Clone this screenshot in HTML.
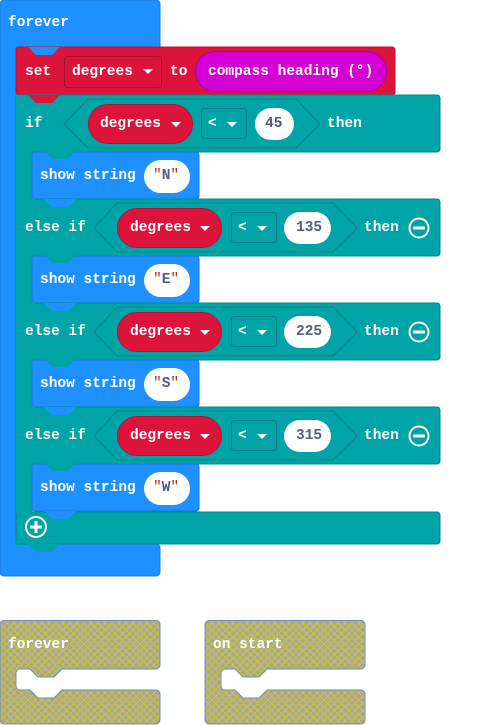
<!DOCTYPE html>
<html><head><meta charset="utf-8"><style>
html,body{margin:0;padding:0;background:#fff;width:492px;height:725px;overflow:hidden}
svg text{font-family:"Liberation Mono",monospace;font-weight:bold;font-size:14.5px;fill:#fff;dominant-baseline:central}
</style></head><body>
<svg width="492" height="725" viewBox="0 0 492 725" xmlns="http://www.w3.org/2000/svg">
<defs>
<pattern id="h" width="7" height="7" patternUnits="userSpaceOnUse">
<rect width="7" height="7" fill="#a6a6a0"/>
<path d="M0,0L7,7M7,0L0,7" stroke="#cfc52a" stroke-width="1.1"/>
</pattern>
</defs>
<!-- forever -->
<path d="M4,0H156a4,4 0 0 1 4,4V47H16V544H156a4,4 0 0 1 4,4V572a4,4 0 0 1-4,4H4a4,4 0 0 1-4-4V4a4,4 0 0 1 4-4Z" fill="#1e90ff" stroke="#1a7ad8" stroke-width="1"/>
<text x="8" y="23">forever</text>
<!-- set block -->
<rect x="16" y="47" width="379" height="48" rx="3" fill="#dc143c" stroke="#b8102f"/>
<polygon points="28,47 60,47 52,55 36,55" fill="#1e90ff"/>
<polygon points="28,95 60,95 52,103 36,103" fill="#dc143c"/>
<text x="25" y="72">set</text>
<rect x="64.5" y="56.5" width="97" height="31" rx="3" fill="#dc143c" stroke="#a80e2e"/>
<text x="72" y="72">degrees</text>
<path d="M143,69h10l-5,5z" fill="#fff"/>
<text x="170" y="72">to</text>
<rect x="195.5" y="51.5" width="191" height="40" rx="20" fill="#d400d4" stroke="#a800a8"/>
<text x="208" y="72">compass heading (°)</text>
<!-- if block -->
<path d="M19,95H437a3,3 0 0 1 3,3V149a3,3 0 0 1-3,3H32V544H19a3,3 0 0 1-3-3V98a3,3 0 0 1 3-3Z" fill="#00a4a6" stroke="#008b8d"/>
<rect x="16" y="95" width="16" height="450" fill="#00a4a6"/>
<polygon points="28,95 60,95 52,103 36,103" fill="#dc143c"/>
<!-- rows -->
<g id="rows"></g>
<!-- row helper rendered explicitly -->
<!-- IF row -->
<text x="25" y="124">if</text>
<polygon points="88,99 296,99 320,124 296,148 88,148 64,124" fill="#00a4a6" stroke="#008385"/>
<rect x="88.5" y="104.5" width="104" height="39" rx="19.5" fill="#dc143c" stroke="#b8102f"/>
<text x="100" y="124">degrees</text><path d="M171,122h10l-5,5z" fill="#fff"/>
<rect x="201.5" y="108.5" width="45" height="30" rx="3" fill="#00a4a6" stroke="#008385"/>
<text x="208" y="124">&lt;</text><path d="M227,122h10l-5,5z" fill="#fff"/>
<rect x="255" y="108" width="39" height="32" rx="16" fill="#fff"/>
<text x="265" y="124" style="fill:#575e75">45</text>
<text x="327" y="124">then</text>

<!-- show N -->
<rect x="32" y="152" width="167" height="47" rx="3" fill="#1e90ff" stroke="#1a7ad8"/>
<polygon points="44,151 76,151 68,159 52,159" fill="#00a4a6"/>
<polygon points="44,199 76,199 68,207 52,207" fill="#1e90ff"/>
<text x="40" y="176">show string</text>
<rect x="144" y="160" width="46" height="33" rx="16.5" fill="#fff"/>
<text x="153" y="176" style="fill:#575e75"><tspan style="fill:#b03030;font-weight:normal">"</tspan>N<tspan style="fill:#b03030;font-weight:normal">"</tspan></text>

<!-- else if rows -->
<g>
<rect x="32" y="199" width="408" height="57" rx="3" fill="#00a4a6" stroke="#008b8d"/>
<rect x="16" y="199" width="20" height="57" fill="#00a4a6"/>
<polygon points="44,199 76,199 68,207 52,207" fill="#1e90ff"/>
<text x="25" y="228">else if</text>
<polygon points="117,203 333,203 357,228 333,252 117,252 94,228" fill="#00a4a6" stroke="#008385"/>
<rect x="117.5" y="208.5" width="104" height="39" rx="19.5" fill="#dc143c" stroke="#b8102f"/>
<text x="130" y="228">degrees</text><path d="M200,226h10l-5,5z" fill="#fff"/>
<rect x="231.5" y="212.5" width="45" height="30" rx="3" fill="#00a4a6" stroke="#008385"/>
<text x="238" y="228">&lt;</text><path d="M257,226h10l-5,5z" fill="#fff"/>
<rect x="284" y="212" width="47" height="32" rx="16" fill="#fff"/>
<text x="296" y="228" style="fill:#575e75">135</text>
<text x="364" y="228">then</text>
<circle cx="419" cy="228" r="9.5" fill="none" stroke="#fff" stroke-width="2"/><rect x="413" y="226.5" width="12" height="3" fill="#fff"/>
<rect x="32" y="256" width="167" height="47" rx="3" fill="#1e90ff" stroke="#1a7ad8"/>
<polygon points="44,255 76,255 68,263 52,263" fill="#00a4a6"/>
<polygon points="44,303 76,303 68,311 52,311" fill="#1e90ff"/>
<text x="40" y="280">show string</text>
<rect x="144" y="264" width="46" height="33" rx="16.5" fill="#fff"/>
<text x="153" y="280" style="fill:#575e75"><tspan style="fill:#b03030;font-weight:normal">"</tspan>E<tspan style="fill:#b03030;font-weight:normal">"</tspan></text>
</g>
<g transform="translate(0,104)">
<rect x="32" y="199" width="408" height="57" rx="3" fill="#00a4a6" stroke="#008b8d"/>
<rect x="16" y="199" width="20" height="57" fill="#00a4a6"/>
<polygon points="44,199 76,199 68,207 52,207" fill="#1e90ff"/>
<text x="25" y="228">else if</text>
<polygon points="117,203 333,203 357,228 333,252 117,252 94,228" fill="#00a4a6" stroke="#008385"/>
<rect x="117.5" y="208.5" width="104" height="39" rx="19.5" fill="#dc143c" stroke="#b8102f"/>
<text x="130" y="228">degrees</text><path d="M200,226h10l-5,5z" fill="#fff"/>
<rect x="231.5" y="212.5" width="45" height="30" rx="3" fill="#00a4a6" stroke="#008385"/>
<text x="238" y="228">&lt;</text><path d="M257,226h10l-5,5z" fill="#fff"/>
<rect x="284" y="212" width="47" height="32" rx="16" fill="#fff"/>
<text x="296" y="228" style="fill:#575e75">225</text>
<text x="364" y="228">then</text>
<circle cx="419" cy="228" r="9.5" fill="none" stroke="#fff" stroke-width="2"/><rect x="413" y="226.5" width="12" height="3" fill="#fff"/>
<rect x="32" y="256" width="167" height="47" rx="3" fill="#1e90ff" stroke="#1a7ad8"/>
<polygon points="44,255 76,255 68,263 52,263" fill="#00a4a6"/>
<polygon points="44,303 76,303 68,311 52,311" fill="#1e90ff"/>
<text x="40" y="280">show string</text>
<rect x="144" y="264" width="46" height="33" rx="16.5" fill="#fff"/>
<text x="153" y="280" style="fill:#575e75"><tspan style="fill:#b03030;font-weight:normal">"</tspan>S<tspan style="fill:#b03030;font-weight:normal">"</tspan></text>
</g>
<g transform="translate(0,208)">
<rect x="32" y="199" width="408" height="57" rx="3" fill="#00a4a6" stroke="#008b8d"/>
<rect x="16" y="199" width="20" height="57" fill="#00a4a6"/>
<polygon points="44,199 76,199 68,207 52,207" fill="#1e90ff"/>
<text x="25" y="228">else if</text>
<polygon points="117,203 333,203 357,228 333,252 117,252 94,228" fill="#00a4a6" stroke="#008385"/>
<rect x="117.5" y="208.5" width="104" height="39" rx="19.5" fill="#dc143c" stroke="#b8102f"/>
<text x="130" y="228">degrees</text><path d="M200,226h10l-5,5z" fill="#fff"/>
<rect x="231.5" y="212.5" width="45" height="30" rx="3" fill="#00a4a6" stroke="#008385"/>
<text x="238" y="228">&lt;</text><path d="M257,226h10l-5,5z" fill="#fff"/>
<rect x="284" y="212" width="47" height="32" rx="16" fill="#fff"/>
<text x="296" y="228" style="fill:#575e75">315</text>
<text x="364" y="228">then</text>
<circle cx="419" cy="228" r="9.5" fill="none" stroke="#fff" stroke-width="2"/><rect x="413" y="226.5" width="12" height="3" fill="#fff"/>
<rect x="32" y="256" width="167" height="47" rx="3" fill="#1e90ff" stroke="#1a7ad8"/>
<polygon points="44,255 76,255 68,263 52,263" fill="#00a4a6"/>
<polygon points="44,303 76,303 68,311 52,311" fill="#1e90ff"/>
<text x="40" y="280">show string</text>
<rect x="144" y="264" width="46" height="33" rx="16.5" fill="#fff"/>
<text x="153" y="280" style="fill:#575e75"><tspan style="fill:#b03030;font-weight:normal">"</tspan>W<tspan style="fill:#b03030;font-weight:normal">"</tspan></text>
</g>
<!-- bottom of if -->
<rect x="16" y="512" width="424" height="32" rx="3" fill="#00a4a6" stroke="#008b8d"/>
<rect x="17" y="505" width="14" height="10" fill="#00a4a6"/>
<polygon points="44,511 76,511 68,519 52,519" fill="#1e90ff"/>
<polygon points="28,544 60,544 52,552 36,552" fill="#00a4a6"/>
<circle cx="36" cy="527" r="10" fill="none" stroke="#fff" stroke-width="2"/>
<rect x="30" y="525.5" width="12" height="3" fill="#fff"/><rect x="34.5" y="521" width="3" height="12" fill="#fff"/>

<!-- grey blocks -->
<path d="M4,620.5H156a4,4 0 0 1 4,4V665a4,4 0 0 1-4,4H62L54,677H38L30,669H20a4,4 0 0 0-4,4V686a4,4 0 0 0 4,4H30L38,698H54L62,690H156a4,4 0 0 1 4,4V720a4,4 0 0 1-4,4H4a4,4 0 0 1-4-4V624.5a4,4 0 0 1 4-4Z" fill="url(#h)" stroke="#6b8fb0"/>
<text x="8" y="645">forever</text>
<g transform="translate(205,0)">
<path d="M4,620.5H156a4,4 0 0 1 4,4V665a4,4 0 0 1-4,4H62L54,677H38L30,669H20a4,4 0 0 0-4,4V686a4,4 0 0 0 4,4H30L38,698H54L62,690H156a4,4 0 0 1 4,4V720a4,4 0 0 1-4,4H4a4,4 0 0 1-4-4V624.5a4,4 0 0 1 4-4Z" fill="url(#h)" stroke="#6b8fb0"/>
<text x="8" y="645">on start</text>
</g>
</svg>
</body></html>
